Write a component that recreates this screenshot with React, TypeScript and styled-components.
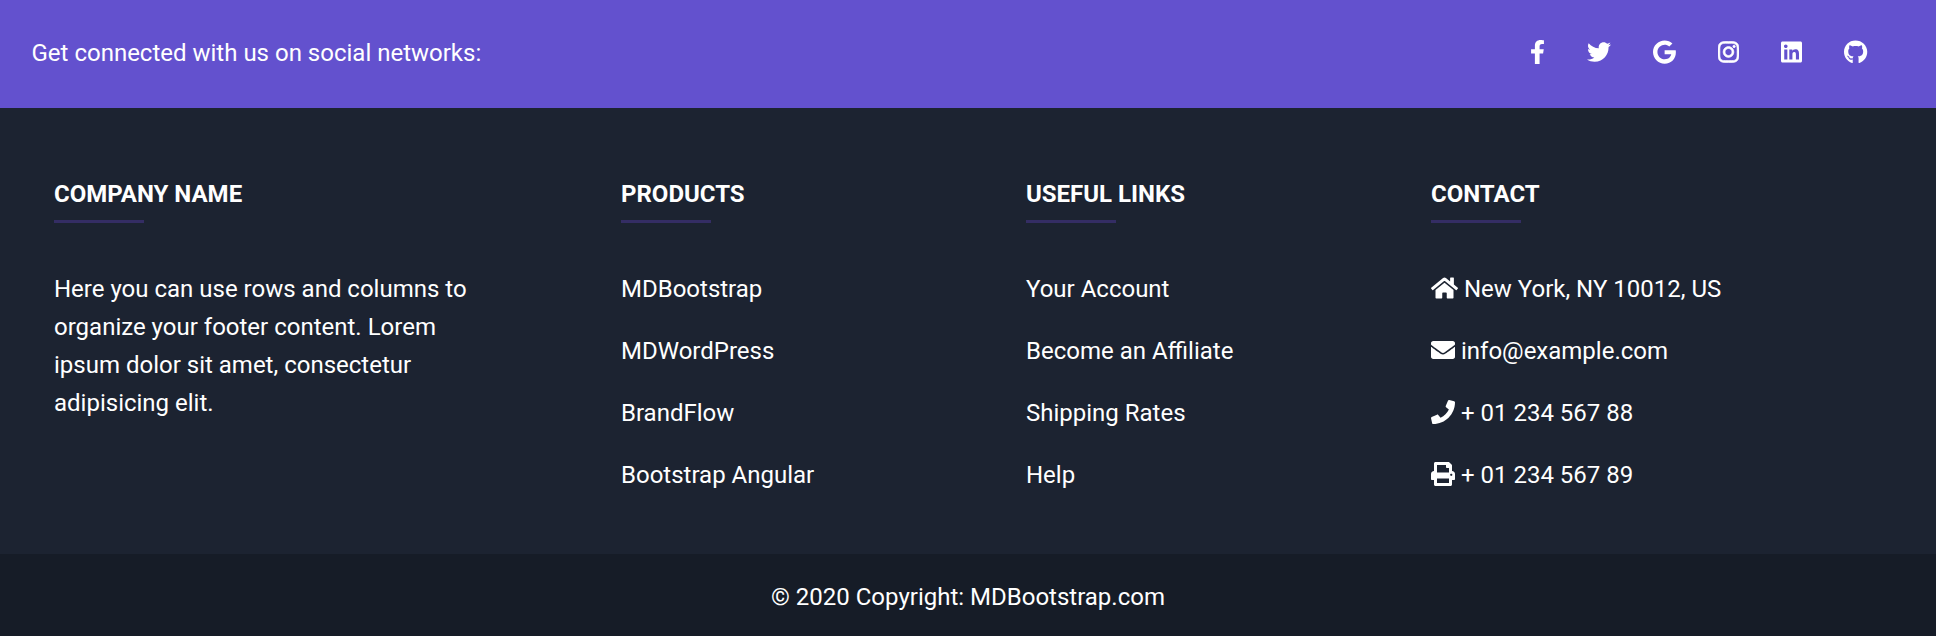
import React from "react";
import styled, { createGlobalStyle } from "styled-components";
import {
  FaEnvelope,
  FaFacebookF,
  FaGithub,
  FaGoogle,
  FaHome,
  FaInstagram,
  FaLinkedin,
  FaPhone,
  FaPrint,
  FaTwitter,
} from "react-icons/fa";

const GlobalStyle = createGlobalStyle`
  *, *::before, *::after { box-sizing: border-box; }
  body {
    margin: 0;
    background: #161c27;
    font-family: Roboto, "Liberation Sans", sans-serif;
    font-size: 24px;
    line-height: 38px;
    color: #fff;
  }
`;

const Footer = styled.footer`
  display: flex;
  flex-direction: column;
  min-height: 636px;
  background: #1c2331;
`;

const SocialBar = styled.section`
  display: flex;
  align-items: center;
  justify-content: space-between;
  height: 108px;
  padding: 0 68.5px 2px 31.5px;
  background: #6351ce;
`;

const SocialLinks = styled.nav`
  display: flex;
  align-items: center;
  gap: 42px;
  margin-bottom: 2px;
`;

const SocialLink = styled.a`
  display: flex;
  color: inherit;
`;

/* Icons share a 512-unit height; each one has its own width in those units. */
const Glyph = styled.span<{ $units: number; $stroke?: number }>`
  svg {
    display: inline-block;
    width: ${({ $units }) => ($units * 24) / 512}px;
    height: 24px;
    stroke-width: ${({ $stroke = 0 }) => $stroke};
    vertical-align: -3px;
  }

  ${SocialLink} & {
    display: flex;
  }
`;

const Columns = styled.section`
  display: grid;
  grid-template-columns: 432px 270px 270px 405px;
  column-gap: 135px;
  height: 446px;
  padding: 67px 54px 0;
`;

const Title = styled.h6`
  margin: 0;
  font-size: 24px;
  font-weight: 700;
  line-height: 38px;
  text-transform: uppercase;
`;

const Rule = styled.hr`
  width: 90px;
  height: 3px;
  margin: 7px 0 47px;
  border: 0;
  background: #7c4dff;
  opacity: 0.25;
`;

const Blurb = styled.p`
  margin: 0;
`;

const List = styled.ul`
  display: flex;
  flex-direction: column;
  gap: 24px;
  margin: 0;
  padding: 0;
  list-style: none;
`;

const Item = styled.li`
  height: 38px;
  white-space: nowrap;
`;

const Link = styled.a`
  color: inherit;
  text-decoration: none;
`;

const Copyright = styled.div`
  height: 82px;
  padding-top: 24px;
  background: rgba(0, 0, 0, 0.2);
  text-align: center;
`;

const socials = [
  { label: "Facebook", Icon: FaFacebookF, units: 320 },
  { label: "Twitter", Icon: FaTwitter, units: 512 },
  { label: "Google", Icon: FaGoogle, units: 488 },
  { label: "Instagram", Icon: FaInstagram, units: 448, stroke: 14 },
  { label: "LinkedIn", Icon: FaLinkedin, units: 448 },
  { label: "GitHub", Icon: FaGithub, units: 496 },
];

const linkColumns = [
  { title: "Products", links: ["MDBootstrap", "MDWordPress", "BrandFlow", "Bootstrap Angular"] },
  { title: "Useful links", links: ["Your Account", "Become an Affiliate", "Shipping Rates", "Help"] },
];

const contacts = [
  { Icon: FaHome, units: 576, text: "New York, NY 10012, US" },
  { Icon: FaEnvelope, units: 512, text: "info@example.com" },
  { Icon: FaPhone, units: 512, text: "+ 01 234 567 88" },
  { Icon: FaPrint, units: 512, text: "+ 01 234 567 89" },
];

export default function App() {
  return (
    <>
      <GlobalStyle />
      <Footer>
        <SocialBar>
          <span>Get connected with us on social networks:</span>
          <SocialLinks>
            {socials.map(({ label, Icon, units, stroke }) => (
              <SocialLink key={label} href="#" aria-label={label}>
                <Glyph $units={units} $stroke={stroke}>
                  <Icon />
                </Glyph>
              </SocialLink>
            ))}
          </SocialLinks>
        </SocialBar>
        <Columns>
          <div>
            <Title>Company name</Title>
            <Rule />
            <Blurb>
              Here you can use rows and columns to organize your footer content. Lorem ipsum dolor sit
              amet, consectetur adipisicing elit.
            </Blurb>
          </div>
          {linkColumns.map(({ title, links }) => (
            <div key={title}>
              <Title>{title}</Title>
              <Rule />
              <List>
                {links.map((link) => (
                  <Item key={link}>
                    <Link href="#">{link}</Link>
                  </Item>
                ))}
              </List>
            </div>
          ))}
          <div>
            <Title>Contact</Title>
            <Rule />
            <List>
              {contacts.map(({ Icon, units, text }) => (
                <Item key={text}>
                  <Glyph $units={units}>
                    <Icon />
                  </Glyph>{" "}
                  {text}
                </Item>
              ))}
            </List>
          </div>
        </Columns>
        <Copyright>
          © 2020 Copyright: <Link href="#">MDBootstrap.com</Link>
        </Copyright>
      </Footer>
    </>
  );
}
